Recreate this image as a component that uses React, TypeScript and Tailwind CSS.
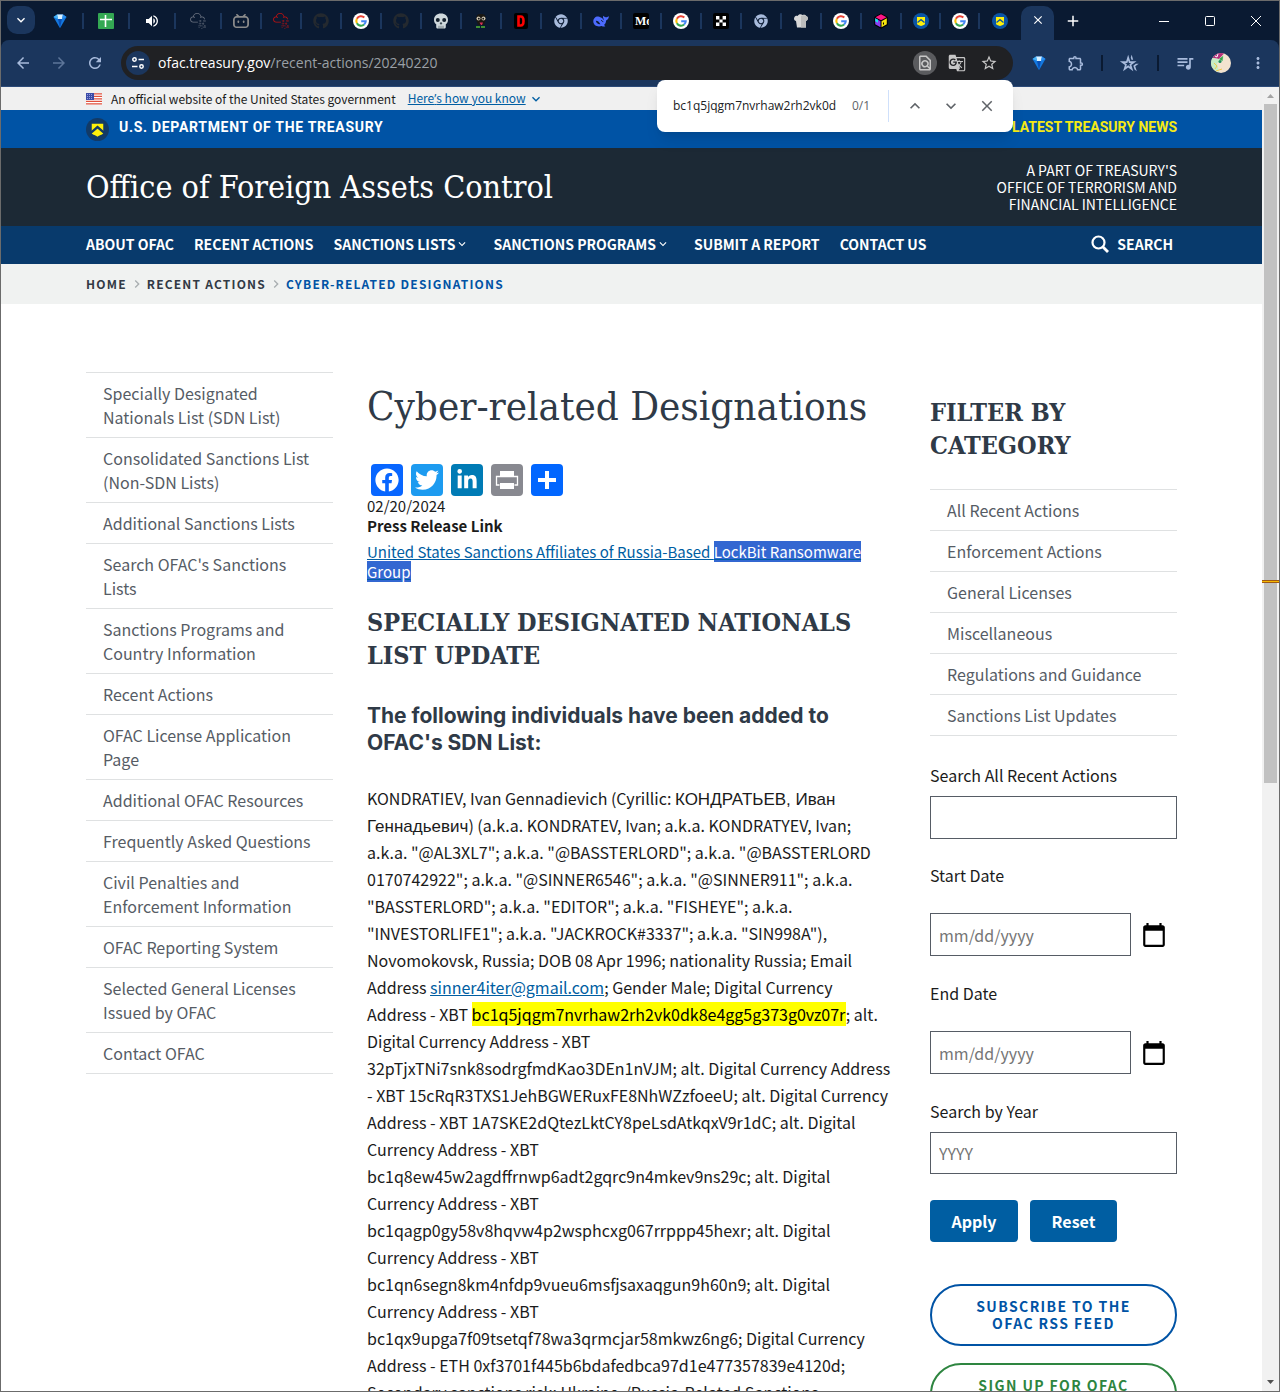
import React from "react";
import { FaGithub, FaChrome, FaFacebook, FaTwitter, FaLinkedinIn } from "react-icons/fa";
import { SiBilibili, SiTryhackme } from "react-icons/si";
import {
  MdVolumeUp,
  MdOutlineFindInPage,
  MdGTranslate,
  MdStarBorder,
  MdOutlineExtension,
  MdOutlineHotelClass,
  MdQueueMusic,
  MdMoreVert,
  MdArrowBack,
  MdArrowForward,
  MdRefresh,
  MdKeyboardArrowUp,
  MdKeyboardArrowDown,
  MdClose,
  MdAdd,
  MdCalendarToday,
} from "react-icons/md";

const GoogleIcon = () => (
  <svg viewBox="0 0 16 16" className="size-4" aria-hidden="true">
    <circle cx="8" cy="8" r="8" fill="#fff" />
    <g fill="none" strokeWidth="2.1">
      <path d="M11.3 4.6A4.7 4.7 0 0 0 3.9 5.7" stroke="#ea4335" />
      <path d="M3.9 5.7a4.7 4.7 0 0 0 0 4.6" stroke="#fbbc05" />
      <path d="M3.9 10.3a4.7 4.7 0 0 0 7.2 1.2" stroke="#34a853" />
      <path d="M11.1 11.5A4.6 4.6 0 0 0 12.7 8.2H8.2" stroke="#4285f4" />
    </g>
  </svg>
);

const DiamondIcon = () => (
  <svg viewBox="0 0 16 16" className="size-4" aria-hidden="true">
    <path d="M1.5 4 5 1.5h6L14.5 4 9 13.5 8 15l-1-1.5z" fill="#1479e0" />
    <path d="M5 1.5h6L10 6H6z" fill="#d9f1ff" />
    <path d="M1.5 4 5 1.5 6 6z" fill="#45b3f5" />
    <path d="M14.5 4 11 1.5 10 6z" fill="#2b8ff0" />
    <path d="M6 6h4l-2 9z" fill="#0a4fb5" />
  </svg>
);

const SheetIcon = () => (
  <svg viewBox="0 0 16 16" className="size-4" aria-hidden="true">
    <rect width="16" height="16" rx="1" fill="#34a853" />
    <path d="M7.5 2v12M2 6.5h12" stroke="#fff" strokeWidth="1.6" />
  </svg>
);

const SkullIcon = () => (
  <svg viewBox="0 0 16 16" className="size-4" aria-hidden="true">
    <path d="M8 .5C3.800.5 1 3 1 6.800 1 9 1.800 10.500 3.200 11.300V14c0 1 .8 1.500 1.600 1.500h6.400c.8 0 1.600-.5 1.600-1.500v-2.700C14.200 10.500 15 9 15 6.800 15 3 12.200.5 8 .5z" fill="#cfd8dc" />
    <circle cx="4.800" cy="7" r="2" fill="#14202c" />
    <circle cx="11.200" cy="7" r="2" fill="#14202c" />
    <path d="M8 9.200 7 11h2zM6 12.800v2.700M8 12.800v2.700M10 12.800v2.700" fill="#14202c" stroke="#37474f" strokeWidth=".6" />
  </svg>
);

const CreatureIcon = () => (
  <svg viewBox="0 0 16 16" className="size-4" aria-hidden="true">
    <path d="M4 2c2-1.500 6-1.500 8 0l1 4-2 6H5L3 6z" fill="#1a1712" />
    <circle cx="5.500" cy="5.500" r="2" fill="#c9c2b0" />
    <circle cx="10.500" cy="5.500" r="2" fill="#c9c2b0" />
    <circle cx="5.800" cy="5.700" r=".9" fill="#111" />
    <circle cx="10.200" cy="5.700" r=".9" fill="#111" />
    <path d="M6.500 9.500h3.500l-1 2.500H8z" fill="#d6335a" />
    <path d="M3 14h10" stroke="#3f8f34" strokeWidth="2" strokeDasharray="4 1" />
  </svg>
);

const LetterD = () => (
  <svg viewBox="0 0 16 16" className="size-4" aria-hidden="true">
    <rect x="1" width="14" height="16" rx="2" fill="#000" />
    <path d="M5.500 3.500h2.200c2.200 0 2.800 1.500 2.800 4.500s-.6 4.500-2.800 4.500H5.500z" fill="none" stroke="#f00" strokeWidth="2.600" />
  </svg>
);

const WhaleIcon = () => (
  <svg viewBox="0 0 16 16" className="size-4" aria-hidden="true">
    <path d="M.3 8.500C.2 5.500 2.600 3.300 5.300 3.600c1.500.2 2.400 1 3.600 1.500.7.200 1 .9 1.500 1.700l.6-.5C10 5.300 9.800 4 10.300 2.700c.7 1 1.500 1.200 2.300 1.500 1.100.3 2-.4 3.200-.9.1 2-.9 3.600-2.700 4.100-.1 2-.9 3.600-2.200 4.700.5.400 1 .6 1.400 1.100-1.200.5-2.500.3-3.600-.3C5 14.300.5 12.700.3 8.500z" fill="#4d6bfe" />
    <path d="M2.800 7.800c1.700-.2 3.200 1 4.700 3.400-2.200.4-4.200-.8-4.700-3.400z" fill="#0a1a32" />
    <path d="M8 7.500c1 0 1.700.6 1.900 1.600" fill="none" stroke="#0a1a32" />
  </svg>
);

const SquaresIcon = () => (
  <svg viewBox="0 0 16 16" className="size-4" aria-hidden="true">
    <rect width="16" height="16" rx="2" fill="#000" />
    <path d="M3 3h3.400v3.400H3zM9.600 3H13v3.400H9.600zM6.400 6.400h3.200v3.200H6.400zM3 9.600h3.400V13H3zM9.600 9.600H13V13H9.600z" fill="#fff" />
  </svg>
);

const ChefIcon = () => (
  <svg viewBox="0 0 16 16" className="size-4" aria-hidden="true">
    <path d="M3 8C1 7.500.5 5.500 1.500 4 2.300 2.600 4 2.500 4.700 3 5.500 1 8 .5 9.500 2c2-.8 3.500 0 4 1.300C15.500 4 15.500 7 13 8v6.500H4z" fill="#d8d8d8" />
    <path d="M8 3v11.500h5V8c2.500-1 2.500-4 .5-4.700C12 2 10 2 8 3z" fill="#bcbcbc" />
  </svg>
);

const CubeIcon = () => (
  <svg viewBox="0 0 16 16" className="size-4" aria-hidden="true">
    <path d="M8 .3 14.800 4v8L8 15.700 1.200 12V4z" fill="#000" />
    <path d="M8 1.200 13.500 4.200 8 7.200 2.500 4.200z" fill="#ff1585" />
    <path d="M8.500 8.200 13.800 5.300v6L8.500 14.300z" fill="#f7e40e" />
    <path d="M2.200 5.300 7.500 8.200v6L2.200 11.300z" fill="#8a3ff0" />
    <path d="M2.200 5.300 5 6.800v3L2.200 8.300z" fill="#18e2e8" />
    <path d="M10.500 9.500v2" stroke="#000" />
  </svg>
);

const TabShield = () => (
  <svg viewBox="0 0 16 16" className="size-4" aria-hidden="true">
    <circle cx="8" cy="8" r="8" fill="#0b55a5" />
    <path d="M4 4h8v6.500c0 1.500-2 1.500-4 2.500-2-1-4-1-4-2.500z" fill="#fff10a" />
    <path d="M4.500 9.500 8 6.700l3.500 2.800" fill="none" stroke="#0b55a5" strokeWidth="1.300" />
  </svg>
);

const ShieldBadge = () => (
  <svg viewBox="0 0 24 24" className="size-[23px]" aria-hidden="true">
    <circle cx="12" cy="12" r="12" fill="#123a66" />
    <path d="M6 6h12v9.500c0 2-3 2-6 4-3-2-6-2-6-4z" fill="#fff10a" />
    <path d="M5 15.500 12 9.500l7 6" fill="none" stroke="#123a66" strokeWidth="2.400" />
  </svg>
);

const AvatarIcon = () => (
  <svg viewBox="0 0 20 20" className="size-5" aria-hidden="true">
    <circle cx="10" cy="10" r="10" fill="#f3e3cf" />
    <path d="M1.500 5A10 10 0 0 1 13 .5L8 6z" fill="#b5307c" />
    <path d="M4 3l2 1 1-3" stroke="#fff" fill="none" />
    <path d="M0 10c0-2 .5-3 1.500-5l6.500 1 5-4-1 6-6 2 2 9C3 18 0 14 0 10z" fill="#c7ecc4" />
    <path d="M8 6l4-3-.5 5z" fill="#35a24a" />
    <circle cx="9" cy="8.500" r="1.500" fill="#1c8c5a" />
    <path d="M3 10l3 3-2 3M5 18l6-2" stroke="#f2c94c" fill="none" />
  </svg>
);

const FlagIcon = () => (
  <svg viewBox="0 0 16 12" className="h-3 w-4" aria-hidden="true">
    <rect width="16" height="12" fill="#fff" />
    <path d="M0 .8h16M0 3.300h16M0 5.800h16M0 8.300h16M0 10.900h16" stroke="#e0503c" strokeWidth="1.300" />
    <rect width="8" height="7" fill="#3b4ba8" />
    <path d="M1 1.500h6M1 3.500h6M1 5.500h6" stroke="#a9b4e8" strokeWidth=".8" strokeDasharray="1 1" />
  </svg>
);

const PrintIcon = () => (
  <svg viewBox="0 0 32 32" className="size-8" aria-hidden="true">
    <path d="M9 7h14v5H9zM9 19h14v6H9z" fill="#fff" />
    <path d="M8.500 21H5.500v-8.500h21V21h-3" fill="none" stroke="#fff" strokeWidth="1.300" />
  </svg>
);

const PlusIcon = () => (
  <svg viewBox="0 0 32 32" className="size-8" aria-hidden="true">
    <path d="M16 7v18M7 16h18" stroke="#fff" strokeWidth="4" />
  </svg>
);

const SiteInfoIcon = () => (
  <svg viewBox="0 0 16 16" className="size-4" fill="none" stroke="#fff" strokeWidth="1.500" aria-hidden="true">
    <circle cx="4.500" cy="4.500" r="1.700" />
    <path d="M8.500 4.500H14M2 11.500h5.500" />
    <circle cx="11.500" cy="11.500" r="1.700" />
  </svg>
);

const MediumIcon = () => (
  <span className="block size-4 overflow-hidden rounded-xs bg-black pl-0.5 font-['Liberation_Serif',serif] text-[12px] leading-4 font-bold text-white">
    Mo
  </span>
);

const tabs: { name: string; icon: React.ReactNode; width: string }[] = [
  { name: "Diamond", icon: <DiamondIcon />, width: "w-[46px]" },
  { name: "Spreadsheet", icon: <SheetIcon />, width: "w-[46px]" },
  { name: "Audio", icon: <MdVolumeUp className="size-4 text-white" />, width: "w-[46px]" },
  { name: "TryHackMe", icon: <SiTryhackme className="size-4 stroke-current text-[#6b7280]" />, width: "w-[46px]" },
  { name: "Bilibili", icon: <SiBilibili className="size-4 text-[#8a8a8a]" />, width: "w-10" },
  { name: "TryHackMe room", icon: <SiTryhackme className="size-4 stroke-current text-[#c11111]" />, width: "w-10" },
  { name: "GitHub", icon: <FaGithub className="size-4 text-[#24292f]" />, width: "w-10" },
  { name: "Google", icon: <GoogleIcon />, width: "w-10" },
  { name: "GitHub repository", icon: <FaGithub className="size-4 text-[#24292f]" />, width: "w-10" },
  { name: "Skull", icon: <SkullIcon />, width: "w-10" },
  { name: "Creature", icon: <CreatureIcon />, width: "w-10" },
  { name: "D", icon: <LetterD />, width: "w-10" },
  { name: "Chrome", icon: <FaChrome className="size-3.5 text-[#a8bbdc]" />, width: "w-10" },
  { name: "DeepSeek", icon: <WhaleIcon />, width: "w-10" },
  { name: "Journal", icon: <MediumIcon />, width: "w-10" },
  { name: "Google search", icon: <GoogleIcon />, width: "w-10" },
  { name: "Squares", icon: <SquaresIcon />, width: "w-10" },
  { name: "Chrome page", icon: <FaChrome className="size-3.5 text-[#a8bbdc]" />, width: "w-10" },
  { name: "Chef", icon: <ChefIcon />, width: "w-10" },
  { name: "Google results", icon: <GoogleIcon />, width: "w-10" },
  { name: "Cube", icon: <CubeIcon />, width: "w-10" },
  { name: "Treasury", icon: <TabShield />, width: "w-[39px]" },
  { name: "Google page", icon: <GoogleIcon />, width: "w-[39px]" },
  { name: "Treasury sanctions", icon: <TabShield />, width: "w-[39px]" },
];

function TabStrip() {
  return (
    <div className="flex h-[39px] items-end bg-[#0a1a32]">
      <button aria-label="Search tabs" className="mb-[6px] ml-1.5 flex size-7 shrink-0 items-center justify-center rounded-[10px] bg-[#1b365d] text-white">
        <MdKeyboardArrowDown className="size-4" />
      </button>
      <div className="ml-[3px] flex h-[39px] items-center">
        {tabs.map((tab, i) => (
          <button key={tab.name} aria-label={tab.name} className={`flex h-4 shrink-0 items-center ${tab.width}`}>
            <span className="flex flex-1 items-center justify-center">{tab.icon}</span>
            {i < tabs.length - 1 && <span className="h-4 w-0.5 bg-[#1b365d]" />}
          </button>
        ))}
      </div>
      <div className="ml-0.5 flex h-[34px] w-[33px] shrink-0 items-center justify-center rounded-t-[10px] bg-[#1b365d] pb-1.5">
        <button aria-label="Close tab" className="text-white">
          <MdClose className="size-3.5" />
        </button>
      </div>
      <button aria-label="New tab" className="ml-2.5 flex h-[39px] items-center text-white">
        <MdAdd className="size-[18px]" />
      </button>
      <div className="ml-auto flex h-[39px] items-center text-white">
        <button aria-label="Minimize" className="flex w-[46px] justify-center">
          <svg viewBox="0 0 10 10" className="size-2.5" stroke="currentColor" aria-hidden="true"><path d="M0 5.500h10" /></svg>
        </button>
        <button aria-label="Maximize" className="flex w-[46px] justify-center">
          <svg viewBox="0 0 10 10" className="size-2.5" fill="none" stroke="currentColor" aria-hidden="true"><rect x=".5" y=".5" width="9" height="9" rx="1" /></svg>
        </button>
        <button aria-label="Close window" className="flex w-[46px] justify-center">
          <svg viewBox="0 0 10 10" className="size-2.5" stroke="currentColor" aria-hidden="true"><path d="M0 0l10 10M10 0L0 10" /></svg>
        </button>
      </div>
    </div>
  );
}

function Toolbar() {
  return (
    <div className="bg-[#0a1a32]">
      <div className="flex h-[47px] items-center rounded-t-lg border-b border-[#2c4a78] bg-[#1b365d] text-[#a8bbdc]">
        <button aria-label="Back" className="ml-[13px]"><MdArrowBack className="size-[18px]" /></button>
        <button aria-label="Forward" className="ml-[18px] text-[#5d7599]"><MdArrowForward className="size-[18px]" /></button>
        <button aria-label="Reload" className="ml-[18px]"><MdRefresh className="size-[18px]" /></button>
        <div className="ml-[17px] flex h-[34px] min-w-0 flex-1 items-center rounded-full bg-[#202124] px-[5px]">
          <button aria-label="Site information" className="flex size-6 shrink-0 items-center justify-center rounded-full bg-[#1b365d]">
            <SiteInfoIcon />
          </button>
          <p className="ml-2 flex-1 truncate font-['Open_Sans','Noto_Sans',sans-serif] text-[14px] leading-5 text-[#9aa0a6]">
            <span className="text-white">ofac.treasury.gov</span>/recent-actions/20240220
          </p>
          <button aria-label="Find in page" className="flex size-6 items-center justify-center rounded-full bg-[#5a5b5e] text-[#c7c7c7]"><MdOutlineFindInPage className="size-[18px]" /></button>
          <button aria-label="Translate" className="ml-[11px] text-[#c7c7c7]"><MdGTranslate className="size-[18px]" /></button>
          <button aria-label="Bookmark" className="mr-2.5 ml-3.5 text-[#c7c7c7]"><MdStarBorder className="size-[18px]" /></button>
        </div>
        <button aria-label="Diamond extension" className="ml-[18px]"><DiamondIcon /></button>
        <button aria-label="Extensions" className="ml-5"><MdOutlineExtension className="size-[18px]" /></button>
        <span className="ml-4 h-4 w-0.5 bg-[#0a1a32]" />
        <button aria-label="Starred" className="ml-4"><MdOutlineHotelClass className="size-5" /></button>
        <span className="ml-[18px] h-4 w-0.5 bg-[#0a1a32]" />
        <button aria-label="Media" className="ml-4"><MdQueueMusic className="size-5" /></button>
        <button aria-label="Profile" className="ml-4"><AvatarIcon /></button>
        <button aria-label="Menu" className="mr-3 ml-[18px]"><MdMoreVert className="size-[18px]" /></button>
      </div>
    </div>
  );
}

function FindBar() {
  return (
    <div role="search" className="absolute top-[79px] right-[266px] z-10 flex h-[52px] w-[356px] items-center rounded-lg bg-white font-['Open_Sans','Noto_Sans',sans-serif] text-[12px] text-[#5f6368] shadow-lg">
      <input aria-label="Find in page" defaultValue="bc1q5jqgm7nvrhaw2rh2vk0dk8e4gg5g373g0vz07r" className="ml-4 w-[163px] text-[#202124] outline-none" />
      <span className="ml-4">0/1</span>
      <span className="ml-[18px] h-8 w-px bg-[#cfe0fb]" />
      <button aria-label="Previous" className="ml-4"><MdKeyboardArrowUp className="size-5" /></button>
      <button aria-label="Next" className="ml-4"><MdKeyboardArrowDown className="size-5" /></button>
      <button aria-label="Close find bar" className="ml-[17px]"><MdClose className="size-[18px]" /></button>
    </div>
  );
}

const sideLinks = [
  "Specially Designated Nationals List (SDN List)",
  "Consolidated Sanctions List (Non-SDN Lists)",
  "Additional Sanctions Lists",
  "Search OFAC's Sanctions Lists",
  "Sanctions Programs and Country Information",
  "Recent Actions",
  "OFAC License Application Page",
  "Additional OFAC Resources",
  "Frequently Asked Questions",
  "Civil Penalties and Enforcement Information",
  "OFAC Reporting System",
  "Selected General Licenses Issued by OFAC",
  "Contact OFAC",
];

const categories = [
  "All Recent Actions",
  "Enforcement Actions",
  "General Licenses",
  "Miscellaneous",
  "Regulations and Guidance",
  "Sanctions List Updates",
];

function LinkList({ items, label }: { items: string[]; label: string }) {
  return (
    <nav aria-label={label}>
      <ul className="border-t border-[#dfe1e2]">
        {items.map((item) => (
          <li key={item} className="border-b border-[#dfe1e2]">
            <a href="#" className="block px-[17px] py-2 text-base leading-6 text-[#565c65]">{item}</a>
          </li>
        ))}
      </ul>
    </nav>
  );
}

function DateField({ id, label }: { id: string; label: string }) {
  return (
    <div>
      <label htmlFor={id} className="block leading-6">{label}</label>
      <div className="mt-[26px] flex items-center">
        <input id={id} placeholder="mm/dd/yyyy" className="h-[43px] min-w-0 flex-1 border border-[#565c65] px-2 placeholder:text-[#757575]" />
        <button type="button" aria-label={`Choose ${label.toLowerCase()}`} className="mr-2.5 ml-2.5 text-black"><MdCalendarToday className="size-[26px]" /></button>
      </div>
    </div>
  );
}

function NavItem({ children, menu }: { children: string; menu?: boolean }) {
  return (
    <a href="#" className={`flex items-center ${menu ? "mr-1" : ""}`}>
      {children}
      {menu && <MdKeyboardArrowDown className="size-3.5" />}
    </a>
  );
}

function SiteHeader() {
  return (
    <header>
      <div className="flex h-[23px] items-center bg-[#f0f0f0] px-[85px] text-[12px] leading-4 text-[#1b1b1b]">
        <FlagIcon />
        <p className="ml-[9px]">An official website of the United States government</p>
        <button className="ml-3 flex items-center text-[#005ea2]"><span className="underline">Here<span className="font-['Open_Sans',sans-serif]">’</span>s how you know</span><MdKeyboardArrowDown className="ml-0.5 size-4" /></button>
      </div>
      <div className="flex h-[38px] items-center justify-between bg-[#0053a5] px-[85px] font-[Roboto,sans-serif] text-[14px] font-bold text-white">
        <a href="#" className="flex items-center gap-2.5 tracking-wider">
          <ShieldBadge />
          <span className="pb-1">U.S. DEPARTMENT OF THE TREASURY</span>
        </a>
        <a href="#" className="pb-1 text-[#f5ea14]">LATEST TREASURY NEWS</a>
      </div>
      <div className="flex h-[78px] items-center justify-between bg-[#1c2935] px-[85px] text-white">
        <p className="font-['DejaVu_Serif_Condensed','DejaVu_Serif',serif] text-[32px] leading-10">Office of Foreign Assets Control</p>
        <p className="text-right text-[14px] leading-[17px]">A PART OF TREASURY'S<br />OFFICE OF TERRORISM AND<br />FINANCIAL INTELLIGENCE</p>
      </div>
      <nav aria-label="Main" className="flex h-[38px] items-center bg-[#083a6c] px-[85px] pb-0.5 text-[14px] font-bold text-white">
        <div className="flex items-center gap-5">
          <NavItem>ABOUT OFAC</NavItem>
          <NavItem>RECENT ACTIONS</NavItem>
          <NavItem menu>SANCTIONS LISTS</NavItem>
          <NavItem menu>SANCTIONS PROGRAMS</NavItem>
          <NavItem>SUBMIT A REPORT</NavItem>
          <NavItem>CONTACT US</NavItem>
        </div>
        <button className="mr-1 ml-auto flex items-center gap-2">
          <svg viewBox="0 0 18 18" className="size-[18px]" fill="none" stroke="currentColor" strokeWidth="2.200" aria-hidden="true"><circle cx="7.500" cy="7.500" r="6" /><path d="M12 12l5 5" strokeWidth="2.800" /></svg>
          SEARCH
        </button>
      </nav>
      <nav aria-label="Breadcrumb" className="flex h-10 items-center bg-[#f0f2f1] px-[85px] text-[12px] font-bold tracking-widest text-[#323a45]">
        <a href="#">HOME</a>
        <MdKeyboardArrowDown className="mx-0.5 size-4 -rotate-90 text-[#a9aeb1]" />
        <a href="#">RECENT ACTIONS</a>
        <MdKeyboardArrowDown className="mx-0.5 size-4 -rotate-90 text-[#a9aeb1]" />
        <span aria-current="page" className="text-[#0053a5]">CYBER-RELATED DESIGNATIONS</span>
      </nav>
    </header>
  );
}

function Article() {
  return (
    <main className="text-[15px] text-[#1b1b1b]">
      <h1 className="mt-2 font-['DejaVu_Serif_Condensed','DejaVu_Serif',serif] text-[40px] leading-[52px] text-[#2f3a47]">Cyber-related Designations</h1>
      <div className="mt-8 flex gap-2 pl-1 text-white">
        <a href="#" aria-label="Facebook" className="flex size-8 items-center justify-center rounded-sm bg-[#0866ff]"><FaFacebook className="size-6" /></a>
        <a href="#" aria-label="Twitter" className="flex size-8 items-center justify-center rounded-sm bg-[#1d9bf0]"><FaTwitter className="size-6" /></a>
        <a href="#" aria-label="LinkedIn" className="flex size-8 items-center justify-center rounded-sm bg-[#007bb5]"><FaLinkedinIn className="size-[22px]" /></a>
        <a href="#" aria-label="Print" className="size-8 rounded-sm bg-[#888990]"><PrintIcon /></a>
        <a href="#" aria-label="Share" className="size-8 rounded-sm bg-[#0166ff]"><PlusIcon /></a>
      </div>
      <p className="leading-5">02/20/2024</p>
      <p className="leading-5 font-bold">Press Release Link</p>
      <p className="mt-1.5 leading-5">
        <a href="#" className="text-[#005ea2] underline">
          United States Sanctions Affiliates of Russia-Based <span className="bg-[#3367d1] text-white">LockBit Ransomware <br />Group</span>
        </a>
      </p>
      <h2 className="mt-6 font-['DejaVu_Serif_Condensed','DejaVu_Serif',serif] text-[25px] leading-[33px] font-bold text-[#2f3a47]">SPECIALLY DESIGNATED NATIONALS LIST UPDATE</h2>
      <h3 className="mt-[30px] font-[Inter,sans-serif] text-[21px] leading-[27px] font-bold text-[#2f3a47]">The following individuals have been added to OFAC's SDN List:</h3>
      <p className="mt-[29px] pr-1 text-base leading-[27px]">
        KONDRATIEV, Ivan Gennadievich (Cyrillic: <span className="font-['Liberation_Sans',sans-serif] text-[17px] leading-5">КОНДРАТЬЕВ, Иван Геннадьевич</span>) (a.k.a. KONDRATEV, Ivan; a.k.a. KONDRATYEV, Ivan; a.k.a. "@AL3XL7"; a.k.a. "@BASSTERLORD"; a.k.a. "@BASSTERLORD 0170742922"; a.k.a. "@SINNER6546"; a.k.a. "@SINNER911"; a.k.a. "BASSTERLORD"; a.k.a. "EDITOR"; a.k.a. "FISHEYE"; a.k.a. "INVESTORLIFE1"; a.k.a. "JACKROCK#3337"; a.k.a. "SIN998A"), Novomokovsk, Russia; DOB 08 Apr 1996; nationality Russia; Email Address <a href="#" className="text-[#005ea2] underline">sinner4iter@gmail.com</a>; Gender Male; Digital Currency Address - XBT <mark className="bg-[#ffff00] text-black">bc1q5jqgm7nvrhaw2rh2vk0dk8e4gg5g373g0vz07r</mark>; alt. Digital Currency Address - XBT 32pTjxTNi7snk8sodrgfmdKao3DEn1nVJM; alt. Digital Currency Address - XBT 15cRqR3TXS1JehBGWERuxFE8NhWZzfoeeU; alt. Digital Currency Address - XBT 1A7SKE2dQtezLktCY8peLsdAtkqxV9r1dC; alt. Digital Currency Address - XBT bc1q8ew45w2agdffrnwp6adt2gqrc9n4mkev9ns29c; alt. Digital Currency Address - XBT bc1qagp0gy58v8hqvw4p2wsphcxg067rrppp45hexr; alt. Digital Currency Address - XBT bc1qn6segn8km4nfdp9vueu6msfjsaxaqgun9h60n9; alt. Digital Currency Address - XBT bc1qx9upga7f09tsetqf78wa3qrmcjar58mkwz6ng6; Digital Currency Address - ETH 0xf3701f445b6bdafedbca97d1e477357839e4120d; Secondary sanctions risk: Ukraine-/Russia-Related Sanctions
      </p>
    </main>
  );
}

function Filters() {
  return (
    <aside className="pt-6 text-base text-[#1b1b1b]">
      <h2 className="font-['DejaVu_Serif_Condensed','DejaVu_Serif',serif] text-[25px] leading-[33px] font-bold text-[#2f3a47]">FILTER BY CATEGORY</h2>
      <div className="mt-[27px]">
        <LinkList items={categories} label="Categories" />
      </div>
      <form className="mt-[27px]" onSubmit={(e) => e.preventDefault()}>
        <label htmlFor="q" className="block leading-6">Search All Recent Actions</label>
        <input id="q" className="mt-[9px] mb-6 h-[43px] w-full border border-[#565c65] px-2" />
        <DateField id="start" label="Start Date" />
        <div className="my-[25px]"><DateField id="end" label="End Date" /></div>
        <label htmlFor="year" className="block leading-6">Search by Year</label>
        <input id="year" placeholder="YYYY" className="mt-[9px] h-[42px] w-full border border-[#565c65] px-2 placeholder:text-[#757575]" />
        <div className="mt-[26px] flex gap-3 leading-[42px] font-bold text-white">
          <button type="submit" className="w-[88px] rounded-sm bg-[#005ea2]">Apply</button>
          <button type="reset" className="w-[87px] rounded-sm bg-[#005ea2]">Reset</button>
        </div>
      </form>
      <div className="mt-[42px] flex flex-col gap-[17px] text-center text-[14px] leading-[17px] font-bold tracking-widest">
        <a href="#" className="rounded-full border-2 border-[#0053a5] px-5 py-3 text-[#0053a5]">SUBSCRIBE TO THE<br />OFAC RSS FEED</a>
        <a href="#" className="rounded-full border-2 border-[#2e8540] px-5 py-3 text-[#2e8540]">SIGN UP FOR OFAC<br />EMAIL UPDATES</a>
      </div>
    </aside>
  );
}

export default function App() {
  return (
    <div className="relative flex h-screen flex-col overflow-hidden border border-[#6b6b6b] bg-white font-['Noto_Sans_CJK_SC',sans-serif]">
      <TabStrip />
      <Toolbar />
      <FindBar />
      <div className="flex min-h-0 flex-1">
        <div className="min-w-0 flex-1 overflow-hidden">
          <SiteHeader />
          <div className="grid grid-cols-[247px_minmax(0,1fr)_247px] items-start gap-x-[34px] px-[85px] pt-[68px]">
            <LinkList items={sideLinks} label="Section" />
            <Article />
            <Filters />
          </div>
        </div>
        <div className="relative flex w-[17px] shrink-0 flex-col items-center bg-[#f1f1f1]" aria-hidden="true">
          <svg viewBox="0 0 17 17" className="size-[17px]" fill="#a3a3a3"><path d="M5 11l3.500-4L12 11z" /></svg>
          <div className="h-[679px] w-[13px] bg-[#c1c1c1]" />
          <svg viewBox="0 0 17 17" className="mt-auto size-[17px]" fill="#505050"><path d="M5 6l3.500 4L12 6z" /></svg>
          <div className="absolute inset-x-0 top-[493px] h-[3px] border-y border-[#a05a12] bg-[#f5b800]" />
        </div>
      </div>
    </div>
  );
}
